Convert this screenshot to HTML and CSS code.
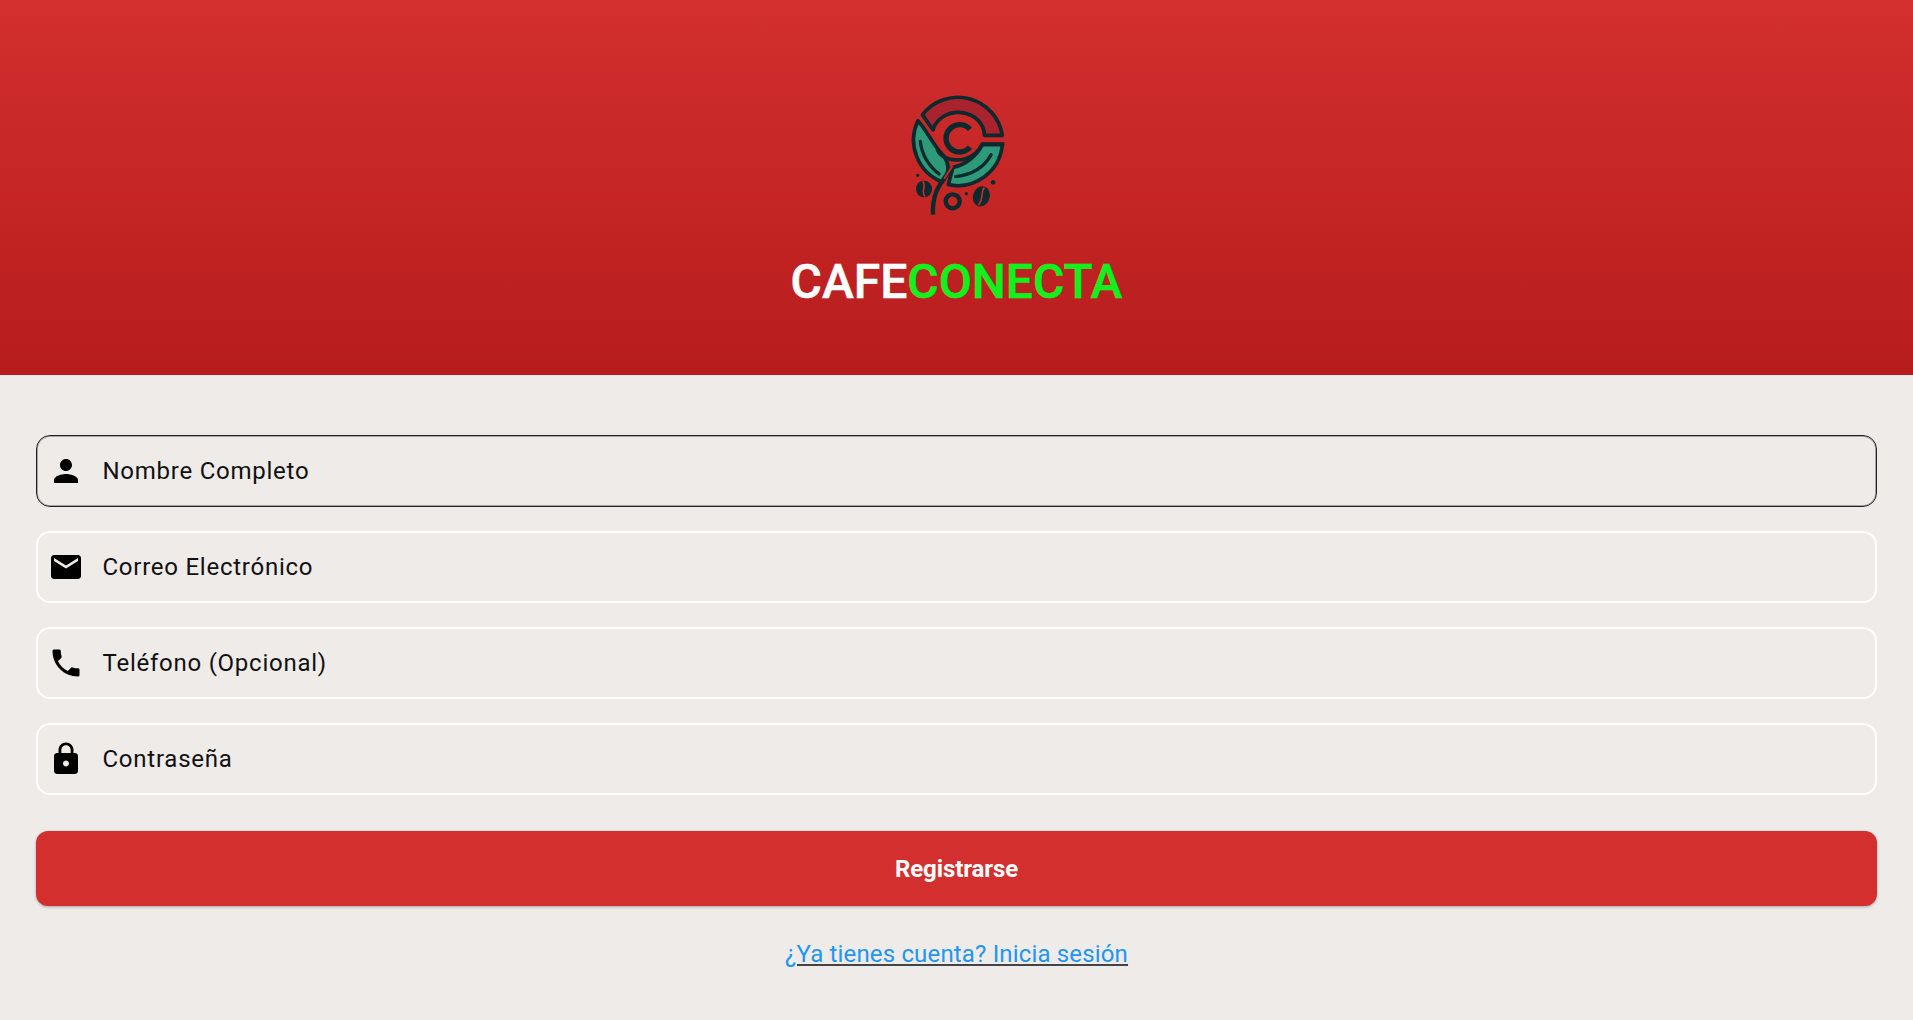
FILE: index.html
```html
<!DOCTYPE html>
<html lang="es">
<head>
  <meta charset="UTF-8">
  <title>CafeConecta</title>
  <meta name="viewport" content="width=device-width, initial-scale=1.0">
  <link rel="stylesheet" href="styles.css">
</head>
<body>

  <header class="hero">
    <svg class="logo" viewBox="-10 0 480 450" aria-hidden="true">
      <!-- top band -->
      <path d="M126 104 A135 135 0 0 1 366 166 L312 166 A78 68 0 0 0 158 150 Z" fill="#a9232f" stroke="#0b2a2e" stroke-width="11" stroke-linejoin="round"/>
      <!-- left leaf -->
      <path d="M113 122 A135 135 0 0 0 186 306 C214 272 204 240 178 214 C158 192 138 150 113 122 Z" fill="#2e9a7a" stroke="#0b2a2e" stroke-width="11" stroke-linejoin="round"/>
      <path d="M120 184 C124 222 146 258 176 282" fill="none" stroke="#0b2a2e" stroke-width="10" stroke-linecap="round"/>
      <!-- right leaf -->
      <path d="M218 262 C258 254 290 226 306 194 L366 194 A135 135 0 0 1 204 314 Z" fill="#2e9a7a" stroke="#0b2a2e" stroke-width="11" stroke-linejoin="round"/>
      <path d="M226 290 C272 284 312 262 332 224" fill="none" stroke="#0b2a2e" stroke-width="10" stroke-linecap="round"/>
      <!-- line under the C -->
      <path d="M170 208 C184 236 218 246 256 236 C280 228 296 212 306 192 L372 192" fill="none" stroke="#0b2a2e" stroke-width="11"/>
      <!-- C -->
      <path d="M269 148 A41 41 0 1 0 269 202" fill="none" stroke="#0b2a2e" stroke-width="16"/>
      <!-- stem -->
      <path d="M214 262 C192 300 154 326 158 404" fill="none" stroke="#0b2a2e" stroke-width="13"/>
      <path d="M192 296 L216 258" fill="none" stroke="#cb2a2a" stroke-width="6"/>
      <!-- beans -->
      <ellipse cx="131" cy="327" rx="24" ry="25" fill="#0b2a2e"/>
      <path d="M127 304 C140 318 120 332 134 350" fill="none" stroke="#cb2a2a" stroke-width="5"/>
      <circle cx="217" cy="364" r="21" fill="none" stroke="#0b2a2e" stroke-width="13"/>
      <ellipse cx="303" cy="349" rx="25" ry="31" transform="rotate(18 303 349)" fill="#0b2a2e"/>
      <path d="M312 322 C300 336 312 352 294 376" fill="none" stroke="#cb2a2a" stroke-width="5"/>
      <circle cx="112" cy="286" r="5" fill="#0b2a2e"/>
      <circle cx="338" cy="307" r="7" fill="#0b2a2e"/>
      <circle cx="258" cy="341" r="5" fill="#0b2a2e"/>
    </svg>
    <h1 class="brand">CAFE<span class="brand-green">CONECTA</span></h1>
  </header>

  <main class="form">

    <label class="field field-focus">
      <svg class="field-icon" viewBox="0 0 24 24"><path d="M12 12c2.21 0 4-1.79 4-4s-1.79-4-4-4-4 1.79-4 4 1.79 4 4 4zm0 2c-2.67 0-8 1.34-8 4v2h16v-2c0-2.66-5.33-4-8-4z"/></svg>
      <span>Nombre Completo</span>
    </label>

    <label class="field">
      <svg class="field-icon" viewBox="0 0 24 24"><path d="M20 4H4c-1.1 0-1.99.9-1.99 2L2 18c0 1.1.9 2 2 2h16c1.1 0 2-.9 2-2V6c0-1.1-.9-2-2-2zm0 4l-8 5-8-5V6l8 5 8-5v2z"/></svg>
      <span>Correo Electrónico</span>
    </label>

    <label class="field">
      <svg class="field-icon" viewBox="0 0 24 24"><path d="M6.62 10.79c1.44 2.83 3.76 5.14 6.59 6.59l2.2-2.2c.27-.27.67-.36 1.02-.24 1.12.37 2.33.57 3.57.57.55 0 1 .45 1 1V20c0 .55-.45 1-1 1-9.39 0-17-7.61-17-17 0-.55.45-1 1-1h3.5c.55 0 1 .45 1 1 0 1.25.2 2.45.57 3.57.11.35.03.74-.25 1.02l-2.2 2.2z"/></svg>
      <span>Teléfono (Opcional)</span>
    </label>

    <label class="field">
      <svg class="field-icon" viewBox="0 0 24 24"><path d="M18 8h-1V6c0-2.76-2.24-5-5-5S7 3.24 7 6v2H6c-1.1 0-2 .9-2 2v10c0 1.1.9 2 2 2h12c1.1 0 2-.9 2-2V10c0-1.1-.9-2-2-2zm-6 9c-1.1 0-2-.9-2-2s.9-2 2-2 2 .9 2 2-.9 2-2 2zm3.1-9H8.9V6c0-1.71 1.39-3.1 3.1-3.1 1.71 0 3.1 1.39 3.1 3.1v2z"/></svg>
      <span>Contraseña</span>
    </label>

    <button class="submit" type="button">Registrarse</button>

    <a class="login-link" href="#">¿Ya tienes cuenta? Inicia sesión</a>

  </main>

</body>
</html>
```

FILE: styles.css
```css
/* Base styles */
body {
  font-family: Roboto, "Liberation Sans", sans-serif;
  margin: 0;
  background-color: #efebe9;
  color: #111;
  height: 1020px;
  overflow: hidden;
}

/* Header */
.hero {
  height: 375px;
  box-sizing: border-box;
  padding-top: 80px;
  display: flex;
  flex-direction: column;
  align-items: center;
  background: linear-gradient(#d32f2f, #b71c1c);
}

.logo {
  width: 160px;
  height: 150px;
  flex-shrink: 0;
}

.brand {
  margin: 22px 0 0;
  font-size: 48px;
  line-height: 60px;
  font-weight: 500;
  -webkit-text-stroke: 0.5px currentColor;
  color: #fff;
}

.brand-green {
  color: #12f01e;
}

/* Form */
.form {
  display: flex;
  flex-direction: column;
  gap: 24px;
  padding: 60px 36px 0;
}

.field {
  display: flex;
  align-items: center;
  gap: 18.5px;
  height: 72px;
  box-sizing: border-box;
  padding: 0 10px;
  border: 2px solid #fff;
  border-radius: 14px;
  font-size: 24px;
  letter-spacing: 0.75px;
}

.field-focus {
  padding: 0 11px;
  border: 1px solid #222;
  box-shadow: inset 0 0 0 1px rgba(0,0,0,0.3);
}

.field-icon {
  width: 36px;
  height: 36px;
  fill: #000;
  flex-shrink: 0;
}

.submit {
  height: 75px;
  margin-top: 12px;
  border: none;
  border-radius: 12px;
  background-color: #d32f2f;
  color: #fff;
  font-family: inherit;
  font-size: 24px;
  font-weight: 700;
  letter-spacing: -0.1px;
  box-shadow: 0 1px 3px rgba(0,0,0,0.3);
}

.login-link {
  align-self: center;
  margin-top: 6px;
  font-size: 24px;
  line-height: 36px;
  letter-spacing: 0.16px;
  color: #2196f3;
  text-decoration-color: #444;
}
```
